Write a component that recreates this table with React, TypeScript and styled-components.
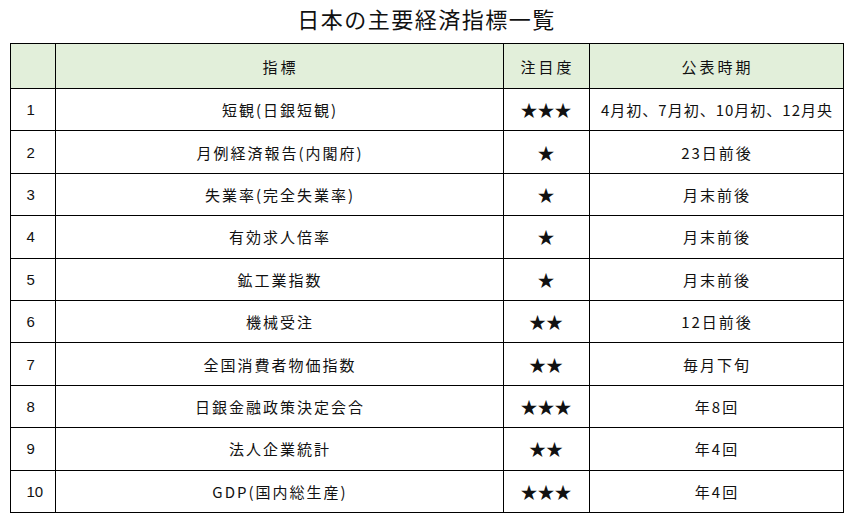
import React from 'react';
import styled, { createGlobalStyle } from 'styled-components';

const GlobalStyle = createGlobalStyle`
  html, body {
    margin: 0;
    padding: 0;
    background: #ffffff;
  }
  body {
    font-family: "Noto Sans CJK JP", "Noto Sans", sans-serif;
    color: #111111;
  }
`;

interface Indicator {
  name: string;
  stars: number;
  timing: string;
}

const rows: Indicator[] = [
  { name: '短観(日銀短観)', stars: 3, timing: '4月初、7月初、10月初、12月央' },
  { name: '月例経済報告(内閣府)', stars: 1, timing: '23日前後' },
  { name: '失業率(完全失業率)', stars: 1, timing: '月末前後' },
  { name: '有効求人倍率', stars: 1, timing: '月末前後' },
  { name: '鉱工業指数', stars: 1, timing: '月末前後' },
  { name: '機械受注', stars: 2, timing: '12日前後' },
  { name: '全国消費者物価指数', stars: 2, timing: '毎月下旬' },
  { name: '日銀金融政策決定会合', stars: 3, timing: '年8回' },
  { name: '法人企業統計', stars: 2, timing: '年4回' },
  { name: 'GDP(国内総生産)', stars: 3, timing: '年4回' },
];

export default function App() {
  return (
    <>
      <GlobalStyle />
      <Page>
        <Title>日本の主要経済指標一覧</Title>
        <Table>
          <colgroup>
            <col style={{ width: 45 }} />
            <col style={{ width: 448 }} />
            <col style={{ width: 86 }} />
            <col style={{ width: 254 }} />
          </colgroup>
          <thead>
            <HeadRow>
              <HeadCell />
              <HeadCell>指標</HeadCell>
              <HeadCell>注目度</HeadCell>
              <HeadCell>公表時期</HeadCell>
            </HeadRow>
          </thead>
          <tbody>
            {rows.map((r, i) => (
              <BodyRow key={i}>
                <NumberCell>{i + 1}</NumberCell>
                <Cell>{r.name}</Cell>
                <StarCell>{'★'.repeat(r.stars)}</StarCell>
                <Cell $tight={r.timing.length > 10}>{r.timing}</Cell>
              </BodyRow>
            ))}
          </tbody>
        </Table>
      </Page>
    </>
  );
}

const Page = styled.div`
  width: 853px;
  height: 516px;
  box-sizing: border-box;
  padding: 0 10px;
  display: flex;
  flex-direction: column;
  align-items: center;
`;

const Title = styled.h1`
  margin: 0;
  height: 43px;
  line-height: 37px;
  font-size: 22px;
  font-weight: 400;
  letter-spacing: 1.5px;
  color: #111111;
`;

const Table = styled.table`
  width: 833px;
  table-layout: fixed;
  border-collapse: collapse;
  border: 1px solid #000000;
`;

const HeadRow = styled.tr`
  height: 45px;
  background: #e2efda;
`;

const BodyRow = styled.tr`
  height: 42.4px;
`;

const HeadCell = styled.th`
  border: 1px solid #000000;
  padding: 0 0 0 3px;
  font-size: 15px;
  font-weight: 400;
  text-align: center;
  letter-spacing: 3px;
`;

const Cell = styled.td<{ $tight?: boolean }>`
  border: 1px solid #000000;
  padding: 0 0 0 2px;
  font-size: 15px;
  text-align: center;
  letter-spacing: ${({ $tight }) => ($tight ? '1px' : '2px')};
  white-space: nowrap;
`;

const NumberCell = styled.td`
  border: 1px solid #000000;
  padding: 0 0 0 16px;
  font-family: "Liberation Sans", Arial, sans-serif;
  font-size: 15px;
  text-align: left;
`;

const StarCell = styled.td`
  border: 1px solid #000000;
  padding: 0;
  font-size: 17px;
  line-height: 1;
  text-align: center;
  font-family: "Noto Sans CJK JP", sans-serif;
`;
